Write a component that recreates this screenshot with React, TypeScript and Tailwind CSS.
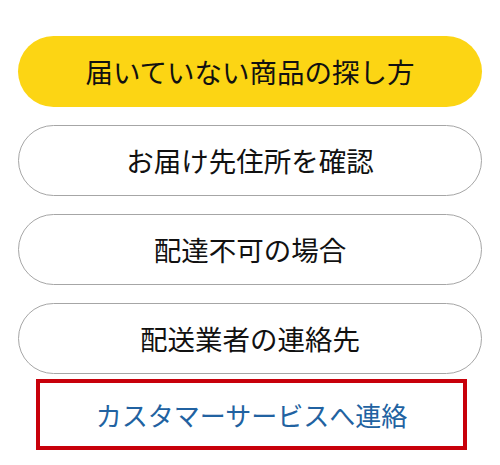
import React from "react";

const font = { fontFamily: '"Noto Sans CJK JP", "Noto Sans", sans-serif' };

export default function App() {
  const items = ["お届け先住所を確認", "配達不可の場合", "配送業者の連絡先"];
  return (
    <div
      className="w-[500px] h-[465px] bg-white flex flex-col pt-[36px] px-[18px]"
      style={font}
    >
      <div className="flex flex-col gap-[18px]">
        <button className="h-[71px] w-full rounded-full bg-[#fcd514] text-[27.5px] text-[#111111] flex items-center justify-center">
          届いていない商品の探し方
        </button>
        {items.map((t) => (
          <button
            key={t}
            className="h-[71px] w-full rounded-full bg-white border border-[#a6a6a6] text-[27.5px] text-[#111111] flex items-center justify-center"
          >
            {t}
          </button>
        ))}
      </div>
      <div className="mt-[5px] ml-[18px] w-[431px] h-[71px] border-4 border-[#c8000a] flex items-center justify-center">
        <span className="text-[26px] text-[#2162a1]">カスタマーサービスへ連絡</span>
      </div>
    </div>
  );
}
